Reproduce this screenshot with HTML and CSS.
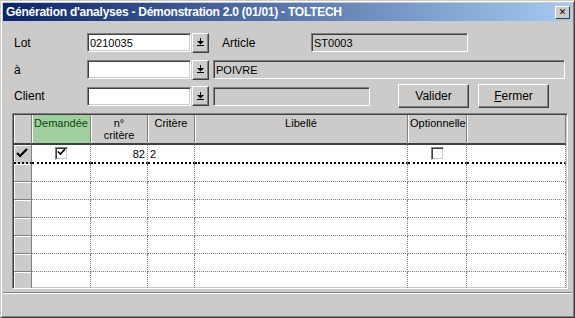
FILE: index.html
```html
<!DOCTYPE html>
<html>
<head>
  <title>Génération d'analyses</title>
  <link rel="stylesheet" href="styles.css">
</head>
<body>
  <div class="window">
    <div class="titlebar">
      <span class="title">Génération d'analyses - Démonstration 2.0 (01/01) - TOLTECH</span>
      <span class="close">&#x2715;</span>
    </div>

    <div class="form">
      <div class="row">
        <label class="label">Lot</label>
        <input class="field" type="text" value="0210035">
        <span class="drop"><svg width="7" height="8" viewBox="0 0 7 8"><path d="M3 0h1v3h3l-3.5 3.5L0 3h3z" fill="#000"/><rect x="0" y="7" width="7" height="1" fill="#000"/></svg></span>
        <label class="label label-article">Article</label>
        <input class="field field-ro field-article" type="text" value="ST0003" readonly>
      </div>

      <div class="row row-2">
        <label class="label">à</label>
        <input class="field" type="text">
        <span class="drop"><svg width="7" height="8" viewBox="0 0 7 8"><path d="M3 0h1v3h3l-3.5 3.5L0 3h3z" fill="#000"/><rect x="0" y="7" width="7" height="1" fill="#000"/></svg></span>
        <input class="field field-ro field-wide" type="text" value="POIVRE" readonly>
      </div>

      <div class="row row-3">
        <label class="label">Client</label>
        <input class="field" type="text">
        <span class="drop"><svg width="7" height="8" viewBox="0 0 7 8"><path d="M3 0h1v3h3l-3.5 3.5L0 3h3z" fill="#000"/><rect x="0" y="7" width="7" height="1" fill="#000"/></svg></span>
        <input class="field field-ro field-client" type="text" readonly>
        <button class="btn btn-valider">Valider</button>
        <button class="btn"><u>F</u>ermer</button>
      </div>
    </div>

    <div class="grid">
      <table class="crit">
        <colgroup>
          <col style="width:18px">
          <col style="width:59px">
          <col style="width:57px">
          <col style="width:47px">
          <col style="width:213px">
          <col style="width:59px">
          <col style="width:99px">
        </colgroup>
        <thead>
          <tr>
            <th class="sel"></th>
            <th class="green">Demandée</th>
            <th>n°<br>critère</th>
            <th>Critère</th>
            <th>Libellé</th>
            <th>Optionnelle</th>
            <th></th>
          </tr>
        </thead>
        <tbody id="critBody">
          <tr class="current">
            <td class="sel"><svg width="12" height="10" viewBox="0 0 12 10"><path d="M1 5l3 3 7-7" fill="none" stroke="#000" stroke-width="2.2"/></svg></td>
            <td class="center"><span class="check on"><svg width="9" height="8" viewBox="0 0 9 8"><path d="M1 3.5l2.5 2.5 4.5-5" fill="none" stroke="#000" stroke-width="1.6"/></svg></span></td>
            <td class="num">82</td>
            <td>2</td>
            <td></td>
            <td class="center"><span class="check"></span></td>
            <td></td>
          </tr>
        </tbody>
      </table>
    </div>

    <div class="status"></div>
  </div>

  <script>
    // empty lines of the grid
    const body = document.getElementById("critBody");
    for (let i = 0; i < 7; i++) {
      const row = document.createElement("tr");
      row.innerHTML = `
        <td class="sel"></td>
        <td></td><td></td><td></td><td></td><td></td><td></td>
      `;
      body.appendChild(row);
    }
  </script>
</body>
</html>
```

FILE: styles.css
```css
body {
  margin: 0;
  font-family: "Liberation Sans", Arial, sans-serif;
  font-size: 12px;
  background: #cccbc9;
}
.window {
  width: 575px;
  height: 318px;
  box-sizing: border-box;
  border: 1px solid;
  border-color: #cccbc9 #404040 #404040 #cccbc9;
  box-shadow: inset 1px 1px 0 #fff, inset -1px -1px 0 #808080;
  padding: 2px;
  background: #cccbc9;
  display: flex;
  flex-direction: column;
  overflow: hidden;
}
/* title bar */
.titlebar {
  height: 18px;
  flex: none;
  display: flex;
  align-items: center;
  justify-content: space-between;
  padding: 0 2px 0 3px;
  background: linear-gradient(to right, #0a246a, #a6caf0);
  color: #fff;
  font-weight: bold;
  font-size: 12px;
  letter-spacing: -0.25px;
}
.close {
  width: 15px;
  height: 13px;
  box-sizing: border-box;
  background: #cccbc9;
  border: 1px solid;
  border-color: #fff #404040 #404040 #fff;
  color: #000;
  font-size: 9px;
  line-height: 11px;
  text-align: center;
  font-weight: bold;
  letter-spacing: 0;
  font-family: "DejaVu Sans", sans-serif;
}
/* form */
.form {
  padding: 12px 0 0 11px;
}
.row {
  display: flex;
  align-items: center;
  height: 19px;
  margin-bottom: 8px;
}
.row-2 {
  margin-bottom: 5px;
}
.row-3 {
  height: 24px;
  margin-bottom: 0;
}
.label {
  width: 73px;
  flex: none;
}
.label-article {
  width: 89px;
  margin-left: 13px;
}
.field {
  width: 104px;
  height: 19px;
  box-sizing: border-box;
  margin: 0;
  padding: 1px 2px 0;
  border: 1px solid;
  border-color: #808080 #fff #fff #808080;
  box-shadow: inset 1px 1px 0 #404040, inset -1px -1px 0 #cccbc9;
  background: #fff;
  font-family: "Liberation Sans", Arial, sans-serif;
  font-size: 11px;
  color: #000;
  outline: none;
}
.field-ro {
  background: #cccbc9;
}
.field-article {
  width: 157px;
}
.field-wide {
  width: 352px;
  margin-left: 4px;
}
.field-client {
  width: 157px;
  margin-left: 4px;
}
.drop {
  width: 17px;
  height: 20px;
  box-sizing: border-box;
  margin-left: 1px;
  border: 1px solid;
  border-color: #fff #404040 #404040 #fff;
  box-shadow: inset -1px -1px 0 #808080;
  display: flex;
  align-items: center;
  justify-content: center;
  padding-bottom: 1px;
}
.btn {
  width: 71px;
  height: 24px;
  margin: 0 0 0 9px;
  padding: 0;
  background: #cccbc9;
  border: 1px solid;
  border-color: #fff #404040 #404040 #fff;
  box-shadow: inset -1px -1px 0 #808080;
  font-family: "Liberation Sans", Arial, sans-serif;
  font-size: 12px;
  color: #000;
}
.btn-valider {
  margin-left: 28px;
}
/* grid */
.grid {
  margin: 5px 0 0 9px;
  width: 556px;
  height: 176px;
  box-sizing: border-box;
  flex: none;
  border: 1px solid;
  border-color: #808080 #fff #fff #808080;
  box-shadow: inset 1px 1px 0 #404040, inset -1px -1px 0 #cccbc9;
  padding: 1px;
  overflow: hidden;
  background: #fff;
}
.crit {
  table-layout: fixed;
  width: 552px;
  border-collapse: separate;
  border-spacing: 0;
  font-size: 11px;
}
.crit th, .crit td {
  box-sizing: border-box;
  padding: 0 2px;
  overflow: hidden;
  white-space: nowrap;
}
.crit th {
  height: 30px;
  background: #cccbc9;
  font-weight: normal;
  vertical-align: top;
  text-align: center;
  line-height: 12px;
  padding-top: 2px;
  border-right: 1px solid #808080;
  border-bottom: 2px solid #404040;
  box-shadow: inset 1px 0 0 #fff;
}
.crit th.green {
  background: #a0cfa0;
  color: #0b4a0b;
}
.crit td {
  height: 18px;
  border-right: 1px dotted #808080;
  border-bottom: 1px dotted #808080;
  vertical-align: middle;
}
.crit tr.current td {
  height: 19px;
  border-bottom: 2px dotted #000;
}
.crit td.sel {
  background: #cccbc9;
  border-right: 1px solid #808080;
  border-bottom: 1px solid #808080;
  box-shadow: inset 1px 1px 0 #fff;
  padding: 0 0 0 2px;
}
.crit tr.current td.sel {
  border-bottom: 2px dotted #000;
}
.crit td.num {
  text-align: right;
}
.crit td.center {
  text-align: center;
}
.check {
  display: inline-block;
  width: 13px;
  height: 13px;
  box-sizing: border-box;
  vertical-align: middle;
  border: 1px solid;
  border-color: #808080 #fff #fff #808080;
  box-shadow: inset 1px 1px 0 #404040, inset -1px -1px 0 #cccbc9;
  background: #fff;
  line-height: 9px;
  text-align: center;
}
/* bottom bar */
.status {
  flex: 1;
  margin-top: 3px;
  border-top: 1px solid #808080;
  box-shadow: inset 0 1px 0 #fff;
}
```
